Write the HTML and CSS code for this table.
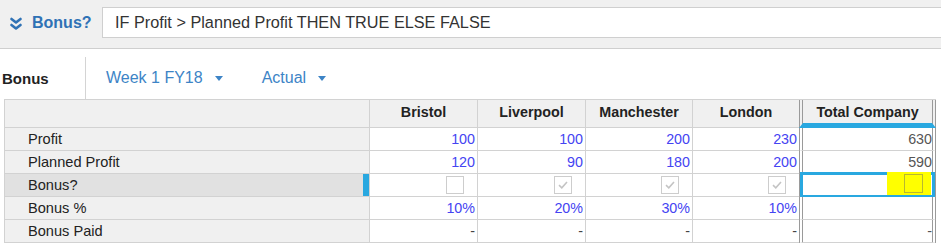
FILE: index.html
```html
<!DOCTYPE html>
<html>
<head>
<meta charset="utf-8">
<link rel="stylesheet" href="styles.css">
</head>
<body>
<div class="formula-bar">
  <div class="formula-name">
    <svg class="chev" width="12" height="14" viewBox="0 0 12 14"><path d="M1.5 2 L6 5.5 L10.5 2 M1.5 8 L6 11.5 L10.5 8" fill="none" stroke="#2f72b5" stroke-width="2.6" stroke-linecap="round" stroke-linejoin="round"/></svg>
    <span>Bonus?</span>
  </div>
  <div class="formula-input">IF Profit &gt; Planned Profit THEN TRUE ELSE FALSE</div>
</div>
<div class="toolbar">
  <div class="module-title">Bonus</div>
  <div class="dropdown first">Week 1 FY18<span class="caret"></span></div>
  <div class="dropdown">Actual<span class="caret"></span></div>
</div>
<div class="grid">
  <div class="cell head corner"></div>
  <div class="cell head">Bristol</div>
  <div class="cell head">Liverpool</div>
  <div class="cell head">Manchester</div>
  <div class="cell head london">London</div>
  <div class="cell head total total-head">Total Company</div>

  <div class="cell label">Profit</div>
  <div class="cell num">100</div>
  <div class="cell num">100</div>
  <div class="cell num">200</div>
  <div class="cell num london">230</div>
  <div class="cell num total">630</div>

  <div class="cell label">Planned Profit</div>
  <div class="cell num">120</div>
  <div class="cell num">90</div>
  <div class="cell num">180</div>
  <div class="cell num london">200</div>
  <div class="cell num total">590</div>

  <div class="cell label selected-row">Bonus?</div>
  <div class="cell num"><span class="box"></span></div>
  <div class="cell num"><span class="box checked"><svg width="10" height="8" viewBox="0 0 10 8"><path d="M1 4.2 L3.8 6.8 L9 1" fill="none" stroke="#c4c4c4" stroke-width="1.6"/></svg></span></div>
  <div class="cell num"><span class="box checked"><svg width="10" height="8" viewBox="0 0 10 8"><path d="M1 4.2 L3.8 6.8 L9 1" fill="none" stroke="#c4c4c4" stroke-width="1.6"/></svg></span></div>
  <div class="cell num london"><span class="box checked"><svg width="10" height="8" viewBox="0 0 10 8"><path d="M1 4.2 L3.8 6.8 L9 1" fill="none" stroke="#c4c4c4" stroke-width="1.6"/></svg></span></div>
  <div class="cell num total active"><span class="highlight"><span class="box hl-box"></span></span></div>

  <div class="cell label">Bonus %</div>
  <div class="cell num">10%</div>
  <div class="cell num">20%</div>
  <div class="cell num">30%</div>
  <div class="cell num london">10%</div>
  <div class="cell num total"></div>

  <div class="cell label">Bonus Paid</div>
  <div class="cell num dash">-</div>
  <div class="cell num dash">-</div>
  <div class="cell num dash">-</div>
  <div class="cell num dash london">-</div>
  <div class="cell num dash total">-</div>
</div>
</body>
</html>
```
FILE: styles.css
```css
* { box-sizing: border-box; }
html, body { margin: 0; padding: 0; background: #fff; }
body {
  font-family: "Liberation Sans", Arial, sans-serif;
  color: #222;
  width: 941px;
  height: 252px;
  overflow: hidden;
}
.formula-bar {
  height: 49px;
  background: #f0f0f0;
  border-bottom: 1px solid #cfcfcf;
  display: flex;
  align-items: flex-start;
  padding-top: 7px;
}
.formula-name {
  width: 102px;
  height: 31px;
  display: flex;
  align-items: center;
  padding-left: 10px;
  color: #2f72b5;
  font-weight: bold;
  font-size: 16px;
}
.chev { margin-right: 10px; margin-top: 2px; }
.formula-input {
  flex: 1;
  height: 31px;
  background: #fff;
  border: 1px solid #cfcfcf;
  border-right: none;
  padding-left: 12px;
  font-size: 16.25px;
  line-height: 28px;
  color: #333;
}
.toolbar {
  height: 50px;
  display: flex;
  align-items: stretch;
}
.module-title {
  width: 86px;
  margin-top: 8px;
  border-right: 1px solid #d4d4d4;
  padding-left: 2px;
  display: flex;
  align-items: center;
  font-weight: bold;
  font-size: 15px;
  color: #222;
}
.dropdown {
  display: flex;
  align-items: center;
  padding-top: 8px;
  font-size: 16px;
  color: #3d84c6;
  margin-left: 39px;
}
.dropdown.first { margin-left: 20px; }
.caret {
  display: inline-block;
  width: 0; height: 0;
  border-left: 4px solid transparent;
  border-right: 4px solid transparent;
  border-top: 5px solid #3d84c6;
  margin-left: 12px;
  margin-top: 1px;
}
.grid {
  margin-left: 4px;
  width: 932px;
  display: grid;
  grid-template-columns: 365px 108px 108px 107px 106px 137px;
  grid-template-rows: 28px repeat(5, 23px);
  border-top: 1px solid #d2d2d2;
  border-left: 1px solid #d2d2d2;
}
.cell {
  border-right: 1px solid #d2d2d2;
  border-bottom: 1px solid #d2d2d2;
  font-size: 14.3px;
  display: flex;
  align-items: center;
  position: relative;
}
.cell.london { border-right: none; }
.cell.total {
  border-left: 4px double #9a9a9a;
  border-right: 4px double #9a9a9a;
}
.head {
  background: #f0f0f0;
  font-weight: bold;
  font-size: 14.3px;
  justify-content: center;
  align-items: flex-start;
  padding-top: 4px;
  color: #222;
}
.total-head { border-bottom: 5px solid #29a8e0; }
.label {
  background: #f0f0f0;
  padding-left: 23px;
  color: #222;
  font-size: 14.6px;
}
.selected-row {
  background: #e1e1e1;
  box-shadow: inset -6px 0 0 #29a8e0;
}
.num {
  justify-content: flex-end;
  padding-right: 2px;
  color: #4444f2;
  background: #fff;
}
.num.total { color: #555; padding-right: 0; }
.dash { color: #444; }
.box {
  width: 18px;
  height: 18px;
  border: 1px solid #cdcdcd;
  background: #fff;
  margin-right: 11px;
  display: flex;
  align-items: center;
  justify-content: center;
}
.active::after {
  content: "";
  position: absolute;
  left: -3px; top: -2px; right: -3px; bottom: -2px;
  border: 3px solid #29a8e0;
  pointer-events: none;
}
.highlight {
  position: absolute;
  right: 1px;
  top: -2px;
  width: 44px;
  height: 23px;
  background: #ffff00;
  z-index: 2;
  display: flex;
  align-items: center;
  justify-content: flex-start;
  padding-left: 17px;
}
.hl-box {
  width: 19px;
  height: 19px;
  background: transparent;
  border: 1px solid #b8b830;
  margin: 0;
}
```
